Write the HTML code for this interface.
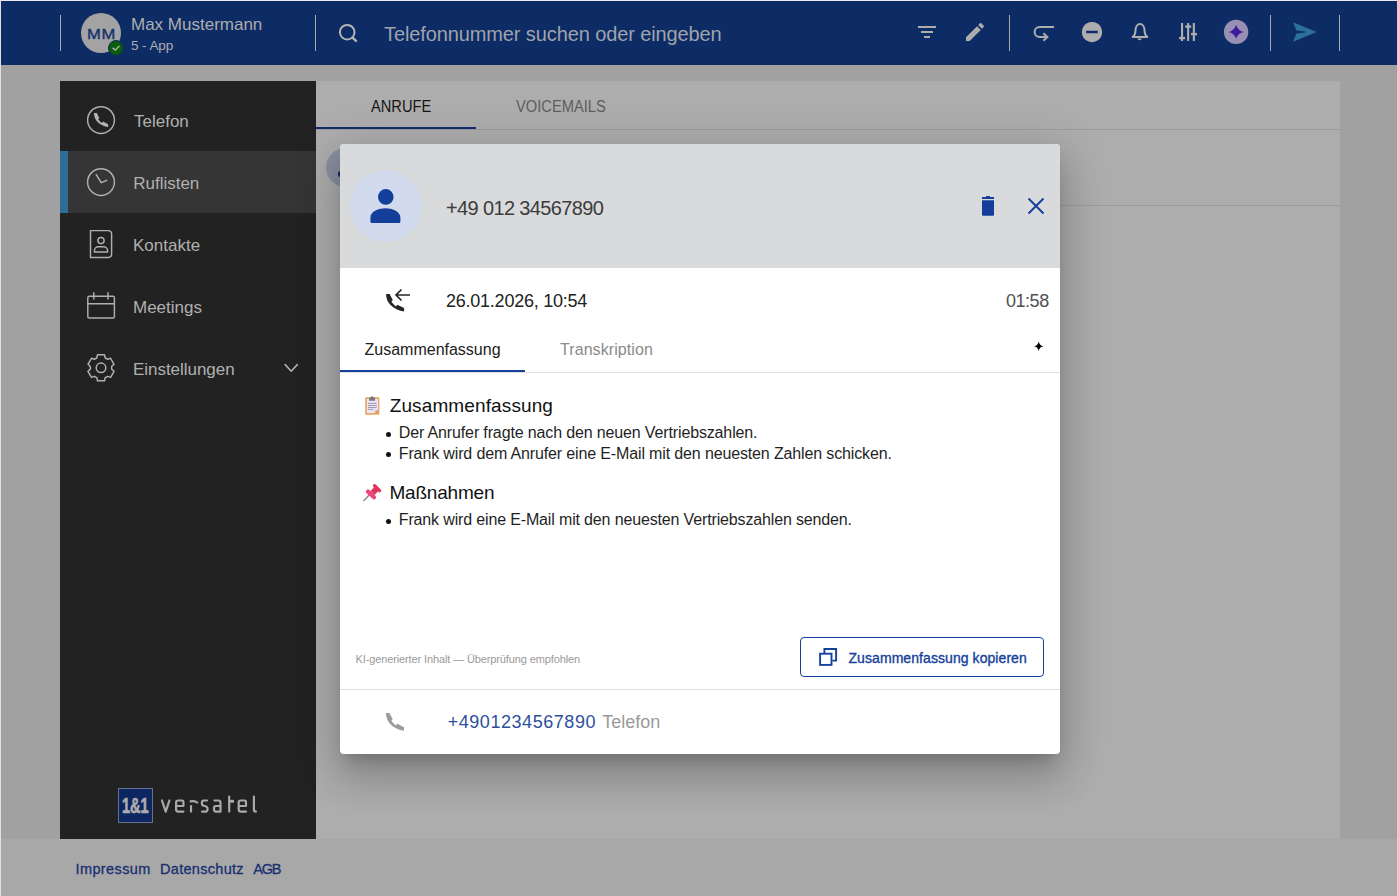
<!DOCTYPE html>
<html lang="de">
<head>
<meta charset="utf-8">
<title>Rufliste</title>
<style>
*{box-sizing:border-box;margin:0;padding:0}
html,body{width:1397px;height:896px;overflow:hidden;background:#a1a1a1;font-family:"Liberation Sans",sans-serif}
body{position:relative}
.abs{position:absolute}
.t{position:absolute;white-space:nowrap;line-height:1}
svg{position:absolute;overflow:visible}
/* frame lines */
#edgeT{left:0;top:0;width:1397px;height:1px;background:#ebe8e5}
#edgeL{left:0;top:0;width:1px;height:896px;background:#e2e1e2}
/* top bar */
#topbar{left:1px;top:1px;width:1396px;height:64px;background:#0d2b64}
.vdiv{position:absolute;top:15px;width:1px;height:36px;background:#a9a9a9}
#avatar{left:81px;top:13px;width:40px;height:40px;border-radius:50%;background:#a3a3a3}
#badge{left:108px;top:40px;width:16px;height:16px;border-radius:50%;background:#0b5d0b;border:1.5px solid #0d2b64}
/* sidebar */
#sidebar{left:60px;top:81px;width:256px;height:758px;background:#222222}
#active{left:60px;top:151px;width:256px;height:62px;background:#353535}
#activebar{left:60px;top:151px;width:8px;height:62px;background:#2b6f98}
.nav{color:#b0b0b0;font-size:17px}
/* content */
#panel{left:316px;top:81px;width:1024px;height:758px;background:#adadad}
#footer{left:1px;top:839px;width:1396px;height:57px;background:#a8a8a8}
#tabline{left:316px;top:129px;width:1024px;height:1px;background:#9b9b9b}
#tabink{left:316px;top:127px;width:160px;height:2px;background:#0f2d6e}
#rowline{left:345px;top:205px;width:995px;height:1px;background:#9d9d9d}
#rowav{left:326px;top:148px;width:39px;height:39px;border-radius:50%;background:#8b91a1}
#rowper{left:337.9px;top:170.700px;width:6px;height:6.200px;border-radius:2.500px 0 0 2.500px;background:#0c2a6b}
/* modal */
#modal{left:340px;top:144px;width:720px;height:610px;background:#fff;border-radius:4px;overflow:hidden;
 box-shadow:0 11px 15px -7px rgba(0,0,0,.2),0 24px 38px 3px rgba(0,0,0,.14),0 9px 46px 8px rgba(0,0,0,.12)}
#mhead{left:0;top:0;width:720px;height:124px;background:#d9dadc}
#mav{left:10px;top:26px;width:72px;height:72px;border-radius:50%;background:#d2dbed}
#mtabline{left:0;top:228px;width:720px;height:1px;background:#dedede}
#mtabink{left:0;top:226px;width:185px;height:2px;background:#14419b}
#mdiv{left:0;top:545px;width:720px;height:1px;background:#e0e0e0}
#btn{left:460px;top:493px;width:244px;height:40px;border:1px solid #14419b;border-radius:4px;background:#fff}
.li{font-size:16px;color:#1f1f1f}
.dot{position:absolute;width:5px;height:5px;border-radius:50%;background:#111}
</style>
</head>
<body>
<div class="abs" id="panel"></div>
<div class="abs" id="footer"></div>
<div class="abs" id="sidebar"></div>
<div class="abs" id="active"></div>
<div class="abs" id="activebar"></div>
<div class="abs" id="topbar"></div>
<div class="abs" id="edgeT"></div>
<div class="abs" id="edgeL"></div>

<!-- TOPBAR CONTENT -->
<div class="vdiv" style="left:60px"></div>
<div class="vdiv" style="left:315px"></div>
<div class="vdiv" style="left:1009px"></div>
<div class="vdiv" style="left:1270px"></div>
<div class="vdiv" style="left:1339px"></div>
<div class="abs" id="avatar"></div>
<div class="abs" id="badge"></div>
<span class="t" id="tMM" style="-webkit-text-stroke:.4px #16336f;left:86.900px;top:26.400px;font-size:15.5px;color:#16336f;font-weight:400;letter-spacing:.6px;transform:scaleX(1.07);transform-origin:0 0">MM</span>
<span class="t" id="tName" style="left:131px;top:15.6px;font-size:17px;color:#adadad">Max Mustermann</span>
<span class="t" id="tApp" style="left:131px;top:38.6px;font-size:13.5px;color:#adadad;letter-spacing:-.08px">5 - App</span>
<span class="t" id="tSearch" style="left:384px;top:24.1px;font-size:20px;color:#9fa3ad;letter-spacing:-.11px">Telefonnummer suchen oder eingeben</span>
<svg id="svgTop" style="left:0;top:0" width="1397" height="66" viewBox="0 0 1397 66">
  <!-- badge check -->
  <polyline points="113,48.2 115.4,50.1 119,46.2" fill="none" stroke="#aebcae" stroke-width="1.35" stroke-linecap="round" stroke-linejoin="round"/>
  <!-- search -->
  <circle cx="347.2" cy="32.2" r="7.3" fill="none" stroke="#b4b4b4" stroke-width="2"/>
  <line x1="352.6" y1="37.6" x2="356" y2="40.9" stroke="#b4b4b4" stroke-width="2.4" stroke-linecap="round"/>
  <g fill="#adadad">
    <!-- filter -->
    <rect x="918" y="26" width="18" height="2"/><rect x="921" y="31" width="12" height="2"/><rect x="924" y="36" width="6" height="2"/>
    <!-- pencil -->
    <path transform="translate(963,20)" d="M3 17.25V21h3.75L17.81 9.94l-3.750-3.750L3 17.25zM20.710 7.040c.39-.39.39-1.020 0-1.410l-2.340-2.340c-.39-.39-1.020-.39-1.410 0l-1.830 1.830 3.750 3.750 1.830-1.830z"/>
    <!-- minus circle -->
    <path d="M1092 21.900 a10.150 10.150 0 1 0 .001 0z M1086.100 30.700 h11.700 v2.600 h-11.700z" fill-rule="evenodd"/>
    <!-- sliders -->
    <rect x="1181" y="23" width="2.1" height="18"/><rect x="1187.1" y="23" width="2.1" height="18"/><rect x="1192.8" y="23" width="2.1" height="18"/>
    <rect x="1179.1" y="36.9" width="6" height="2.4"/><rect x="1185.2" y="25.4" width="6" height="2.4"/><rect x="1191" y="32.9" width="6" height="2.4"/>
    <!-- bell clapper -->
    <path d="M1137.4 38.4 h4.400 a2.200 1.800 0 0 1 -4.400 0z"/>
  </g>
  <g fill="none" stroke="#adadad" stroke-width="2" stroke-linecap="butt" stroke-linejoin="miter">
    <!-- redirect -->
    <path d="M1054 27 H1039.6 a5 5 0 0 0 0 10 H1047"/>
    <polyline points="1043.4,33.2 1047.4,37 1043.4,40.8"/>
    <!-- bell -->
    <path stroke-linejoin="round" d="M1132.6 37 C1135 35.2 1135.500 33.500 1135.500 30.500 C1135.500 26.500 1137.500 24 1140 24 C1142.500 24 1144.500 26.500 1144.500 30.500 C1144.500 33.500 1145 35.200 1147.400 37z"/>
  </g>
  <!-- AI -->
  <circle cx="1236.1" cy="31.9" r="12.2" fill="#9890b4"/>
  <path d="M1236.1 24.7 Q1237.600 30.400 1243.400 31.900 Q1237.600 33.400 1236.100 39.100 Q1234.600 33.400 1228.800 31.900 Q1234.600 30.400 1236.100 24.700z" fill="#3b1d9c"/>
  <!-- send -->
  <path d="M1293 22.2 L1316.8 32 L1293 41.700 L1296.400 33.500 L1305 32.500 L1305 31.500 L1296.400 30.500z" fill="#2a7099"/>
</svg>

<!-- SIDEBAR CONTENT -->
<span class="t nav" id="tN1" style="left:134px;top:112.5px">Telefon</span>
<span class="t nav" id="tN2" style="left:133.2px;top:174.5px">Ruflisten</span>
<span class="t nav" id="tN3" style="left:133px;top:236.5px">Kontakte</span>
<span class="t nav" id="tN4" style="left:133px;top:298.5px">Meetings</span>
<span class="t nav" id="tN5" style="left:133px;top:360.5px;letter-spacing:-.04px">Einstellungen</span>
<svg id="svgSide" style="left:60px;top:81px" width="256" height="758" viewBox="60 81 256 758">
  <g fill="none" stroke="#b0b0b0" stroke-width="1.45" stroke-linejoin="round" stroke-linecap="round">
    <circle cx="101" cy="120.1" r="13.4"/>
    <circle cx="101" cy="182.100" r="13.400"/>
    <polyline points="96.2,174.6 101.2,182.7 106.8,180.3"/>
    <!-- contacts -->
    <path d="M90.5 230.6 H108.6 a3 3 0 0 1 3 3 V254.4 a3 3 0 0 1 -3 3 H90.5z"/>
    <circle cx="101" cy="240.6" r="3.1"/>
    <path d="M94.4 252 v-1.2 a4 4 0 0 1 4 -4 h5.2 a4 4 0 0 1 4 4 v1.2z"/>
    <!-- calendar -->
    <rect x="87.8" y="296.3" width="26.6" height="21.600" rx="1.5"/>
    <path d="M87.8 303.8 H114.4 M93.8 292.600 V299 M108 292.600 V299"/>
    <!-- gear -->
    <path d="M96.82 357.95 L97.51 354.76 L104.49 354.76 L105.18 357.95 A10.7 10.7 0 0 1 107.44 359.25 L110.55 358.25 L114.04 364.31 L111.62 366.50 A10.7 10.7 0 0 1 111.62 369.10 L114.04 371.29 L110.55 377.35 L107.44 376.35 A10.7 10.7 0 0 1 105.18 377.65 L104.49 380.84 L97.51 380.84 L96.82 377.65 A10.7 10.7 0 0 1 94.56 376.35 L91.45 377.35 L87.96 371.29 L90.38 369.10 A10.7 10.7 0 0 1 90.38 366.50 L87.96 364.31 L91.45 358.25 L94.56 359.25 A10.7 10.7 0 0 1 96.82 357.95z" stroke-width="1.5"/>
    <circle cx="101" cy="367.8" r="4.8" stroke-width="1.5"/>
    <!-- chevron -->
    <polyline points="285.2,364.6 291.2,371.2 297.3,364.6" stroke-width="1.6"/>
  </g>
  <path transform="translate(93.9,112.9) scale(.79)" d="M0 .2 H3.600 L6.800 6.400 L5.400 8 Q7.400 10.600 9.900 12.700 L11.300 11 L18.100 14.400 V17.900 C13 17.300 7.800 14.700 4.300 11.100 C1.500 8.200 .2 4.500 0 .2z" fill="#b4b4b4"/>
</svg>
<div class="abs" id="logobox" style="left:118px;top:788px;width:35px;height:35px;background:#0c2661;border:1px solid #66728f"></div>
<span class="t" id="tLogo" style="-webkit-text-stroke:.7px #adadad;left:121.500px;top:795px;font-size:22px;font-weight:700;color:#adadad;transform:scaleX(.66);transform-origin:0 0;letter-spacing:0">1&amp;1</span>
<svg id="svgLogo" style="left:156px;top:790px" width="110" height="30" viewBox="156 790 110 30">
  <g fill="none" stroke="#a9a9a9" stroke-width="2.2" stroke-linecap="round" stroke-linejoin="round">
    <path d="M162 800.5 L165.700 811.600 L169.400 800.500"/>
    <path id="le" d="M183.4 811.6 H178.1 Q176.1 811.600 176.100 809.600 V802.500 Q176.100 800.500 178.100 800.500 H181.900 Q183.400 800.500 183.400 802 V806 H176.500"/>
    <path d="M191 806 V811.6 M190.600 801.400 Q194.500 800.300 197.200 802.500"/>
    <path d="M207 800.5 H203.900 Q201.900 800.500 201.900 802.500 V803.500 Q201.900 805.300 203.900 805.800 L205.500 806.300 Q207.500 806.800 207.500 808.600 V809.600 Q207.500 811.600 205.500 811.600 H202"/>
    <path d="M214.5 800.5 H218.500 Q220.500 800.500 220.500 802.500 V811.600 H216 Q214 811.600 214 809.600 V808 Q214 806 216 806 H220.200"/>
    <path d="M229.2 796.6 V811.600"/><path d="M229.2 801.300 H234" stroke-width="2.800" stroke-linecap="butt"/>
    <path transform="translate(62.600,0)" d="M183.400 811.600 H178.100 Q176.100 811.600 176.100 809.600 V802.500 Q176.100 800.500 178.100 800.500 H181.900 Q183.400 800.500 183.400 802 V806 H176.500"/>
    <path d="M253.900 796.600 V809.400 Q253.900 811.600 256 811.600"/>
  </g>
</svg>

<!-- PANEL CONTENT -->
<div class="abs" id="tabline"></div>
<div class="abs" id="tabink"></div>
<div class="abs" id="rowline"></div>
<div class="abs" id="rowav"></div>
<div class="abs" id="rowper"></div>
<span class="t" id="tTab1" style="left:370.7px;top:98.5px;font-size:16px;color:#161616;transform:scaleX(.916);transform-origin:0 0">ANRUFE</span>
<span class="t" id="tTab2" style="left:516.4px;top:98.5px;font-size:16px;color:#5e5e5e;transform:scaleX(.918);transform-origin:0 0">VOICEMAILS</span>

<!-- FOOTER -->
<span class="t" id="tF1" style="left:75.5px;top:861.600px;font-size:14.5px;color:#1a2f72;letter-spacing:.4px;-webkit-text-stroke:.3px #1a2f72">Impressum</span>
<span class="t" id="tF2" style="left:160px;top:861.600px;font-size:14.5px;color:#1a2f72;letter-spacing:.3px;-webkit-text-stroke:.3px #1a2f72">Datenschutz</span>
<span class="t" id="tF3" style="left:253.3px;top:861.600px;font-size:14.5px;color:#1a2f72;letter-spacing:-1.2px;-webkit-text-stroke:.3px #1a2f72">AGB</span>

<!-- MODAL -->
<div class="abs" id="modal">
  <div class="abs" id="mhead"></div>
  <div class="abs" id="mav"></div>
  <span class="t" id="tPhone" style="left:106px;top:54.3px;font-size:20px;color:#3c3c3c;letter-spacing:-.63px">+49 012 34567890</span>
  <span class="t" id="tDate" style="left:106px;top:148.2px;font-size:18px;color:#212121;letter-spacing:-.24px">26.01.2026, 10:54</span>
  <span class="t" id="tDur" style="left:666px;top:148px;font-size:18px;color:#505050;letter-spacing:-.47px">01:58</span>
  <span class="t" id="tMT1" style="left:24.5px;top:197.5px;font-size:16px;color:#212121">Zusammenfassung</span>
  <span class="t" id="tMT2" style="left:220px;top:197.5px;font-size:16px;color:#8a8a8a;letter-spacing:.08px">Transkription</span>
  <div class="abs" id="mtabline"></div>
  <div class="abs" id="mtabink"></div>
  <span class="t" id="tH1" style="left:49.700px;top:252.2px;font-size:19px;color:#111;letter-spacing:.12px">Zusammenfassung</span>
  <div class="dot" style="left:46.2px;top:287.500px"></div>
  <span class="t li" id="tL1" style="left:58.800px;top:281.200px;letter-spacing:-.14px">Der Anrufer fragte nach den neuen Vertriebszahlen.</span>
  <div class="dot" style="left:46.2px;top:308.300px"></div>
  <span class="t li" id="tL2" style="left:58.800px;top:302px;letter-spacing:-.14px">Frank wird dem Anrufer eine E-Mail mit den neuesten Zahlen schicken.</span>
  <span class="t" id="tH2" style="left:49.500px;top:338.900px;font-size:19px;color:#111;letter-spacing:-.21px">Maßnahmen</span>
  <div class="dot" style="left:46.2px;top:375px"></div>
  <span class="t li" id="tL3" style="left:58.800px;top:368.300px;letter-spacing:-.15px">Frank wird eine E-Mail mit den neuesten Vertriebszahlen senden.</span>
  <span class="t" id="tKI" style="left:15.500px;top:510.300px;font-size:11px;color:#999;letter-spacing:-.12px">KI-generierter Inhalt — Überprüfung empfohlen</span>
  <div class="abs" id="btn"></div>
  <span class="t" id="tBtn" style="left:508.500px;top:506.800px;font-size:14px;color:#14419b;font-weight:400;-webkit-text-stroke:.35px #14419b;letter-spacing:.07px">Zusammenfassung kopieren</span>
  <div class="abs" id="mdiv"></div>
  <span class="t" id="tNum" style="left:107.700px;top:569.400px;font-size:18px;color:#2d4f9e;letter-spacing:.55px">+4901234567890</span>
  <span class="t" id="tTel" style="left:262.300px;top:569.400px;font-size:18px;color:#9a9a9a">Telefon</span>
  <svg id="svgModal" style="left:0;top:0" width="720" height="610" viewBox="0 0 720 610">
  <!-- person -->
  <g fill="#133f9a">
    <circle cx="45.8" cy="52.9" r="7.8"/>
    <path d="M30.4 77.6 V73.500 C30.400 67.300 39 64.300 45.400 64.300 C51.800 64.300 60.400 67.300 60.400 73.500 V77.600 a1.500 1.500 0 0 1 -1.500 1.500 H31.900 a1.500 1.500 0 0 1 -1.500 -1.500z"/>
    <!-- trash -->
    <rect x="642" y="53" width="12" height="2"/><rect x="646.1" y="52" width="3.8" height="1.200"/>
    <path d="M642 56.300 h12 v14.500 a1 1 0 0 1 -1 1 h-10 a1 1 0 0 1 -1 -1z"/>
  </g>
  <!-- close -->
  <path d="M688.500 54.500 L703.500 69.500 M703.500 54.500 L688.500 69.500" stroke="#14419b" stroke-width="2" fill="none"/>
  <!-- incoming call -->
  <path transform="translate(46,149.700)" d="M0 .2 H3.600 L6.800 6.400 L5.400 8 Q7.400 10.600 9.900 12.700 L11.300 11 L18.100 14.400 V17.900 C13 17.300 7.800 14.700 4.300 11.100 C1.500 8.200 .2 4.500 0 .2z" fill="#262626"/>
  <path d="M70 151 H56.600 M61.500 145.500 L56 151 L61.500 156.500" fill="none" stroke="#262626" stroke-width="1.700" stroke-linejoin="miter"/>
  <!-- sparkle -->
  <path d="M698.700 197.500 Q699.400 201.500 703.400 202.200 Q699.400 202.900 698.700 206.900 Q698 202.900 694 202.200 Q698 201.500 698.700 197.500z" fill="#000"/>
  <!-- clipboard emoji -->
  <rect x="25.200" y="253.200" width="14.200" height="17.600" rx="1.300" fill="#e8a462"/>
  <rect x="26.900" y="254.900" width="11.200" height="14.200" fill="#ece5f4"/>
  <path d="M38.100 265.500 V269.100 H34.500z" fill="#e09548"/>
  <path d="M34.500 269.100 L34.500 266.500 Q34.500 265.500 35.500 265.500 L38.100 265.500z" fill="#cfc8e6"/>
  <g stroke="#9a90a8" stroke-width="0.900"><path d="M28 259.400 H36.700 M28 261.500 H36.700 M28 263.500 H36.700 M28 265.400 H33.200"/></g>
  <path d="M29.200 256.700 V254.400 Q29.200 253.300 30.500 253.300 H30.900 Q31.200 252.300 32.150 252.300 Q33.100 252.300 33.400 253.300 H33.800 Q35.100 253.300 35.100 254.400 V256.700z" fill="#7d7383"/>
  <!-- pushpin emoji -->
  <path d="M29.200 351 L23.900 356.600" stroke="#8c809a" stroke-width="1.400" stroke-linecap="round"/>
  <path d="M30.500 347 L35 342.500 L39 346.500 L34.500 351z" fill="#d23a62"/>
  <path d="M34.600 341.700 L39.500 346.600" stroke="#ee2c5e" stroke-width="3.400" stroke-linecap="round"/>
  <path d="M28 347.600 L34 353.200" stroke="#f0447a" stroke-width="4.200" stroke-linecap="round"/>
  <!-- copy icon -->
  <g fill="none" stroke="#14419b" stroke-width="1.900"><rect x="480.100" y="509.700" width="11.400" height="11.200"/><path d="M484.400 509 V505 H496.100 V516.600 H492.300"/></g>
  <!-- phone bottom -->
  <path transform="translate(45.900,568.800)" d="M0 .2 H3.600 L6.800 6.400 L5.400 8 Q7.400 10.600 9.900 12.700 L11.300 11 L18.100 14.400 V17.900 C13 17.300 7.800 14.700 4.300 11.100 C1.500 8.200 .2 4.500 0 .2z" fill="#9c9c9c"/>
</svg>
</div>
</body>
</html>
